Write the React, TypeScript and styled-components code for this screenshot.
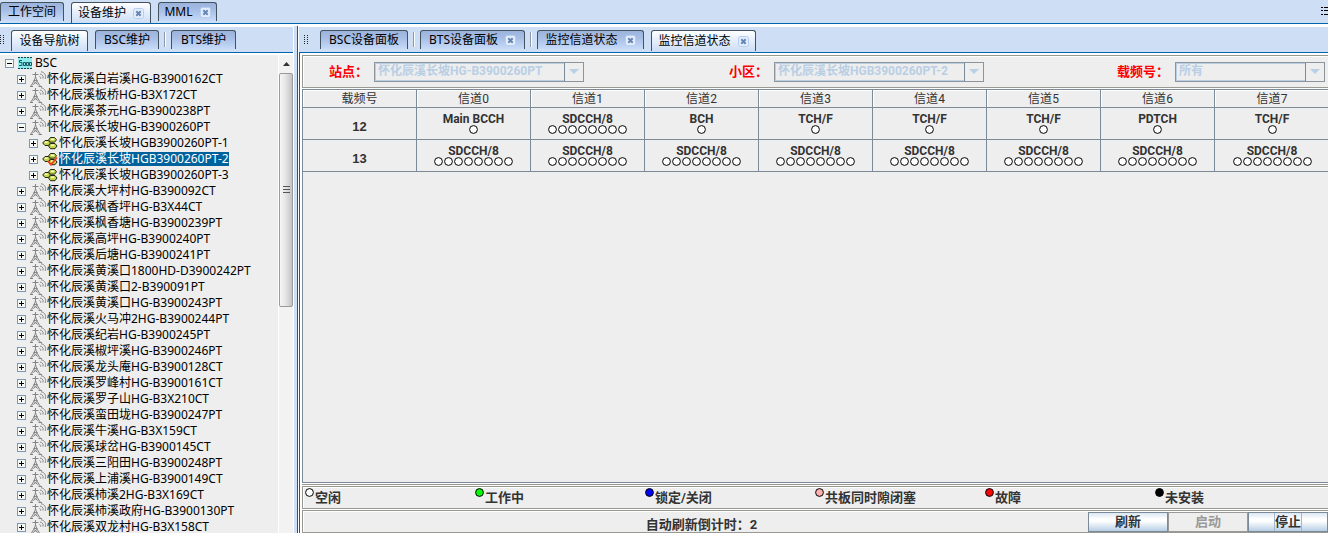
import React from "react";
import styled, { createGlobalStyle, css } from "styled-components";

const CJK = `"Noto Sans CJK SC", sans-serif`;
const UI = `"Noto Sans", ${CJK}`;
const BOLD = `Roboto, ${CJK}`;

const Global = createGlobalStyle`
  * { box-sizing: border-box; }
  html, body, #root { height: 100%; margin: 0; }
  body { background: #fff; font: 12px/16px ${UI}; color: #000; overflow: hidden; }
  button, select { font: inherit; color: inherit; margin: 0; padding: 0; }
`;

const Page = styled.div`
  display: flex;
  flex-direction: column;
  height: 100%;
`;

const TabBar = styled.nav<{ $top?: boolean }>`
  flex: none;
  display: flex;
  align-items: flex-end;
  height: ${(p) => (p.$top ? 24 : 26)}px;
  padding-bottom: ${(p) => (p.$top ? 1 : 2)}px;
  background: #cedef5;
  border-bottom: 1px solid #0063ad;
  overflow: hidden;
`;

const Tab = styled.button<{ $active?: boolean; $w: number }>`
  flex: none;
  display: flex;
  align-items: center;
  justify-content: center;
  gap: 7px;
  width: ${(p) => p.$w}px;
  height: ${(p) => (p.$active ? 21 : 19)}px;
  margin-bottom: ${(p) => (p.$active ? -1 : 1)}px;
  border: 1px solid #42525f;
  border-bottom: 0;
  border-radius: 3px 3px 0 0;
  white-space: nowrap;
  background: linear-gradient(#9cb4dc, #a5bce4 35%, #c6dbf8);
  ${(p) =>
    p.$active &&
    css`
      background: linear-gradient(#fff, #e6effc 45%, #cedef5);
    `}
`;

const Space = styled.span<{ $w: number }>`
  flex: none;
  width: ${(p) => p.$w}px;
`;

const Divider = styled.span`
  flex: none;
  width: 2px;
  height: 15px;
  margin: 0 5px 3px;
  background: #8e98a6;
  border-right: 1px solid #fff;
`;

const Grip = styled.span<{ $l: number; $r: number }>`
  flex: none;
  width: 5px;
  height: 10px;
  margin: 0 ${(p) => p.$r}px 5px ${(p) => p.$l}px;
  background: repeating-linear-gradient(90deg, transparent 0 1px, #cedef5 1px 3px),
    repeating-linear-gradient(#20262e 0 1px, #cedef5 1px 2px);
`;

const MenuMark = styled.svg`
  margin: 0 0 7px auto;
`;

const Body = styled.div`
  flex: 1;
  min-height: 0;
  display: flex;
  padding-top: 2px;
`;

const Side = styled.aside`
  flex: none;
  width: 293px;
  display: flex;
  flex-direction: column;
  padding-top: 1px;
`;

const TreeArea = styled.div`
  flex: 1;
  min-height: 0;
  display: flex;
  margin-top: 2px;
  background: #eee;
`;

const Tree = styled.ul`
  flex: 1;
  min-width: 0;
  margin: 0;
  padding: 0 0 0 5px;
  list-style: none;
  overflow: hidden;
`;

const Row = styled.li<{ $level: number }>`
  display: flex;
  align-items: center;
  height: 16px;
  padding-left: ${(p) => p.$level * 12}px;
  white-space: nowrap;
`;

const Toggle = styled.button`
  display: flex;
  width: 9px;
  height: 9px;
  margin-right: 4px;
  border: 0;
  background: none;
`;

const Label = styled.span<{ $selected?: boolean }>`
  line-height: 14px;
  ${(p) =>
    p.$selected &&
    css`
      background: #00629c;
      color: #fff;
    `}
`;

const Scroll = styled.div`
  width: 15px;
  display: flex;
  flex-direction: column;
  background: #f2f2f2;
  border-left: 1px solid #fff;
`;

const ScrollUp = styled.button`
  height: 18px;
  border: 0;
  background: none;
  display: flex;
  align-items: center;
  justify-content: center;
`;

const Thumb = styled.div`
  height: 234px;
  border: 1px solid #9a9a9a;
  border-radius: 2px;
  background: linear-gradient(90deg, #f6f6f6, #e6e6e6 45%, #c2c2c6);
  display: flex;
  align-items: center;
  justify-content: center;
`;

const Splitter = styled.div`
  flex: none;
  width: 6px;
  background: linear-gradient(90deg, #fff 0 1px, #cedef5 1px 4px, #0063ad 4px 5px, #fff 5px 6px);
`;

const Main = styled.main`
  flex: 1;
  min-width: 0;
  display: flex;
  flex-direction: column;
  padding-top: 1px;
`;

const Content = styled.div`
  flex: 1;
  min-height: 0;
  display: flex;
  flex-direction: column;
  padding: 2px 0 0 2px;
  border-left: 1px solid #0063ad;
  background: #fff;
`;

const Filters = styled.form`
  flex: none;
  display: grid;
  grid-template-columns: 281px 400px 1fr;
  align-items: center;
  height: 33px;
  border: 1px solid #999892;
  border-right: 0;
  background: #eee;
  box-shadow: inset 1px 1px #fff;
`;

const Field = styled.div<{ $end?: boolean }>`
  display: flex;
  align-items: center;
  justify-content: flex-end;
  padding-right: ${(p) => (p.$end ? 3 : 0)}px;
`;

const FieldLabel = styled.label`
  margin-right: 6px;
  font: bold 13px/18px ${BOLD};
  color: #f00;
  white-space: nowrap;
`;

const SelectBox = styled.span<{ $w: number }>`
  display: grid;
  grid-template-columns: 1fr 19px;
  width: ${(p) => p.$w}px;
  height: 20px;
  border: 1px solid #8c949c;
`;

const Select = styled.select`
  grid-area: 1 / 1 / 2 / 3;
  appearance: none;
  min-width: 0;
  width: 100%;
  height: 18px;
  padding: 0 22px 2px 2px;
  border: 1px solid #b8cfe5;
  border-radius: 0;
  outline: 0;
  background: #eee;
  && {
    font: bold 12px/14px ${BOLD};
    color: #b8cfe5;
    opacity: 1;
  }
`;

const Arrow = styled.span`
  grid-area: 1 / 2;
  z-index: 1;
  display: flex;
  align-items: center;
  justify-content: center;
  border-left: 1px solid #7a8a99;
  background: #eee;
  pointer-events: none;
`;

const GridPane = styled.section`
  flex: 1;
  min-height: 0;
  margin-top: 1px;
  border-left: 1px solid #7a8a99;
  border-bottom: 1px solid #7a8a99;
  background: #eee;
  overflow: hidden;
`;

const Table = styled.table`
  width: calc(100% + 1px);
  table-layout: fixed;
  border-collapse: separate;
  border-spacing: 0;
  border-top: 1px solid #7a8a99;
  color: #333;
`;

const Th = styled.th`
  height: 18px;
  padding: 0;
  font: 12px/16px Roboto, ${CJK};
  border-right: 1px solid #7a8a99;
  border-bottom: 1px solid #7a8a99;
  box-shadow: inset 1px 1px #fff;
  &:last-child { border-right: 0; }
`;

const Td = styled.td`
  height: 32px;
  padding: 0 0 1px;
  text-align: center;
  vertical-align: middle;
  font: bold 12px/12px ${BOLD};
  border-right: 1px solid #7a8a99;
  border-bottom: 1px solid #7a8a99;
  &:last-child { border-right: 0; }
`;

const RowHead = styled(Td).attrs({ as: "th" })`
  padding-top: 7px;
  font: bold 13px/16px "Liberation Sans", sans-serif;
`;

const Dots = styled.span`
  display: flex;
  justify-content: center;
  gap: 1px;
  height: 9px;
`;

const Legend = styled.ul`
  flex: none;
  display: flex;
  height: 23px;
  margin: 3px 0 0;
  padding: 1px 0 0 2px;
  list-style: none;
  border: 1px solid #999892;
  border-width: 1px 0 1px 1px;
  background: #eee;
  box-shadow: 0 -1px #fff, 0 -2px #999892, inset 1px 1px #fff;
`;

const LegendItem = styled.li`
  flex: none;
  width: 170px;
  display: flex;
  align-items: flex-start;
  gap: 1px;
  font: bold 13px/20px ${BOLD};
  color: #333;
`;

const Footer = styled.footer`
  flex: none;
  display: flex;
  justify-content: space-between;
  height: 23px;
  margin-top: 1px;
  border: 1px solid #999892;
  border-width: 1px 0 1px 1px;
  background: #eee;
  box-shadow: inset 1px 1px #fff;
`;

const Countdown = styled.output`
  flex: 1;
  padding: 5px 0 0 12px;
  text-align: center;
  font: bold 13px/16px ${BOLD};
  line-height: 18px;
  color: #333;
`;

const Action = styled.button`
  width: 80px;
  height: 20px;
  margin-top: 1px;
  border: 1px solid #7a8a99;
  background: linear-gradient(#dde8f3, #fff 35%, #fff 45%, #b8cfe5);
  && {
    font: bold 13px/18px ${BOLD};
    color: #333;
  }
  &&:disabled {
    border-color: #999;
    background: #eee;
    color: #999;
  }
`;

const FocusText = styled.span<{ $focus?: boolean }>`
  display: block;
  width: 28px;
  height: 18px;
  margin: 0 auto;
  white-space: nowrap;
  border: solid ${(p) => (p.$focus ? "#a3b8cc" : "transparent")};
  border-width: 0 1px;
`;

const CloseIcon = () => (
  <svg width="11" height="11" viewBox="0 0 11 11" aria-hidden="true">
    <rect x=".5" y=".5" width="10" height="10" rx="2" fill="#e4eefb" stroke="#b4cdf0" />
    <path d="M3.3 3.3l4.4 4.4M7.7 3.3L3.3 7.7" stroke="#6585b6" strokeWidth="2" />
  </svg>
);

const BoxIcon = ({ open }: { open?: boolean }) => (
  <svg width="9" height="9" viewBox="0 0 9 9" shapeRendering="crispEdges" aria-hidden="true">
    <rect x=".5" y=".5" width="8" height="8" fill="#f8f8f5" stroke="#7898b5" />
    <path d={open ? "M2 4.5h5" : "M2 4.5h5M4.5 2v5"} stroke="#000" />
  </svg>
);

const RackIcon = () => (
  <svg width="14" height="12" viewBox="0 0 14 12" aria-hidden="true">
    <path fill="#8fecec" d="M0 0h14v12H0z" />
    <path d="M0 .5h14M0 11.5h14" stroke="#1c4050" strokeDasharray="2 1" />
    <path d="M4 3.5H1.5v2H4v3H1M5.5 5.5h2v3h-2zM8.5 5.5h2v3h-2zM11.5 5.5h2v3h-2z" fill="none" stroke="#185a68" />
  </svg>
);

const TowerIcon = () => (
  <svg width="17" height="16" viewBox="0 0 17 16" fill="none" stroke="#858585" aria-hidden="true">
    <path d="M5.5 1v5M2.5 3.5h6M5.500 6L4 10 .5 15.500M5.500 6L7 10l3.500 5.500M3.500 9.500h4M4 10.500l4.500 3.500M7 10.500L2.500 14M0 15.500h3M8.500 15.500H12" />
    <path d="M9.500 5.500c1 .3 1.500 1 1.200 2.200M10 3c2.500.4 3.600 2.200 3 4.500M11 .700c3.800.700 5.300 3.800 4.200 7.300" />
  </svg>
);

const CellIcon = ({ checked }: { checked?: boolean }) => (
  <svg width="16" height="14" viewBox="0 0 16 14" aria-hidden="true">
    <g fill="#c4d450" stroke="#20280c">
      <path d="M.7 7L3 4.500h3.500L8.500 7l-2 2.500H3z" />
      <path d="M6.500 4L8.500 1.500h4l2 2.300-2 2.400H8.500z" />
      <path d="M6.500 10L8.500 7.500h4.500l2 2.500-2 2.700H8.500z" />
    </g>
    <path d="M3 6.200h2.500M9 3.200h3M9 9.200h3" stroke="#f8fcc8" strokeWidth="1.500" />
    {checked && <path d="M6 9l3 3.500 6-7" fill="none" stroke="#f03c18" strokeWidth="1.800" />}
  </svg>
);

const Dot = ({ fill = "#fff" }: { fill?: string }) => (
  <svg width="9" height="9" viewBox="0 0 9 9" aria-hidden="true">
    <circle cx="4.500" cy="4.500" r="3.900" fill={fill} stroke="#000" />
  </svg>
);

const channels = [0, 1, 2, 3, 4, 5, 6, 7];
const carriers: { id: number; slots: [string, number][] }[] = [
  {
    id: 12,
    slots: [["Main BCCH", 1], ["SDCCH/8", 8], ["BCH", 1], ["TCH/F", 1], ["TCH/F", 1], ["TCH/F", 1], ["PDTCH", 1], ["TCH/F", 1]],
  },
  { id: 13, slots: channels.map((): [string, number] => ["SDCCH/8", 8]) },
];

const legend = [
  ["空闲", "#fff"],
  ["工作中", "#0f0"],
  ["锁定/关闭", "#00f"],
  ["共板同时隙闭塞", "#ffafaf"],
  ["故障", "#f00"],
  ["未安装", "#000"],
];

type Node = { text: string; cell?: boolean; open?: boolean; selected?: boolean };
const site = (text: string): Node => ({ text: "怀化辰溪" + text });
const nodes: Node[] = [
  site("白岩溪HG-B3900162CT"),
  site("板桥HG-B3X172CT"),
  site("茶元HG-B3900238PT"),
  { ...site("长坡HG-B3900260PT"), open: true },
  { ...site("长坡HGB3900260PT-1"), cell: true },
  { ...site("长坡HGB3900260PT-2"), cell: true, selected: true },
  { ...site("长坡HGB3900260PT-3"), cell: true },
  ...[
    "大坪村HG-B390092CT",
    "枫香坪HG-B3X44CT",
    "枫香塘HG-B3900239PT",
    "高坪HG-B3900240PT",
    "后塘HG-B3900241PT",
    "黄溪口1800HD-D3900242PT",
    "黄溪口2-B390091PT",
    "黄溪口HG-B3900243PT",
    "火马冲2HG-B3900244PT",
    "纪岩HG-B3900245PT",
    "椒坪溪HG-B3900246PT",
    "龙头庵HG-B3900128CT",
    "罗峰村HG-B3900161CT",
    "罗子山HG-B3X210CT",
    "蛮田垅HG-B3900247PT",
    "牛溪HG-B3X159CT",
    "球岔HG-B3900145CT",
    "三阳田HG-B3900248PT",
    "上浦溪HG-B3900149CT",
    "柿溪2HG-B3X169CT",
    "柿溪政府HG-B3900130PT",
    "双龙村HG-B3X158CT",
  ].map(site),
];

const Combo = ({ id, label, value, width, end }: { id: string; label: string; value: string; width: number; end?: boolean }) => (
  <Field $end={end}>
    <FieldLabel htmlFor={id}>{label}</FieldLabel>
    <SelectBox $w={width}>
      <Select id={id} disabled defaultValue={value}>
        <option>{value}</option>
      </Select>
      <Arrow>
        <svg width="10" height="5" viewBox="0 0 10 5" aria-hidden="true">
          <path d="M0 0h10L5 5z" fill="#b8cfe5" />
        </svg>
      </Arrow>
    </SelectBox>
  </Field>
);

export default function App() {
  return (
    <Page>
      <Global />
      <TabBar $top>
        <Tab $w={64}>工作空间</Tab>
        <Space $w={7} />
        <Tab $active $w={80}>设备维护<CloseIcon /></Tab>
        <Space $w={7} />
        <Tab $w={59}>MML<CloseIcon /></Tab>
        <MenuMark width="7" height="9" viewBox="0 0 7 9" shapeRendering="crispEdges" aria-hidden="true">
          <path d="M0 1h2M3 1h4M0 4.500h2M3 4.500h4M0 8h2M3 8h4" stroke="#000" />
        </MenuMark>
      </TabBar>
      <Body>
        <Side>
          <TabBar>
            <Grip $l={0} $r={6} />
            <Tab $active $w={77}>设备导航树</Tab>
            <Space $w={7} />
            <Tab $w={64}>BSC维护</Tab>
            <Divider />
            <Tab $w={65}>BTS维护</Tab>
          </TabBar>
          <TreeArea>
            <Tree>
              <Row $level={0}>
                <Toggle aria-label="BSC"><BoxIcon open /></Toggle>
                <RackIcon />
                <Space $w={3} />
                <Label>BSC</Label>
              </Row>
              {nodes.map((n) => (
                <Row key={n.text} $level={n.cell ? 2 : 1}>
                  <Toggle aria-label={n.text}><BoxIcon open={n.open} /></Toggle>
                  {n.cell ? <CellIcon checked={n.selected} /> : <TowerIcon />}
                  <Space $w={n.cell ? 1 : 0} />
                  <Label $selected={n.selected}>{n.text}</Label>
                </Row>
              ))}
            </Tree>
            <Scroll>
              <ScrollUp aria-label="向上">
                <svg width="7" height="4" viewBox="0 0 7 4" aria-hidden="true"><path d="M0 4l3.500-4L7 4z" fill="#333" /></svg>
              </ScrollUp>
              <Thumb>
                <svg width="7" height="8" viewBox="0 0 7 8" shapeRendering="crispEdges" aria-hidden="true">
                  <path d="M0 .5h7M0 3.500h7M0 6.500h7" stroke="#555" />
                </svg>
              </Thumb>
            </Scroll>
          </TreeArea>
        </Side>
        <Splitter />
        <Main>
          <TabBar>
            <Grip $l={5} $r={11} />
            <Tab $w={88}>BSC设备面板</Tab>
            <Divider />
            <Tab $w={105}>BTS设备面板<CloseIcon /></Tab>
            <Divider />
            <Tab $w={107}>监控信道状态<CloseIcon /></Tab>
            <Space $w={7} />
            <Tab $active $w={105}>监控信道状态<CloseIcon /></Tab>
          </TabBar>
          <Content>
            <Filters>
              <Combo id="site" label="站点：" value="怀化辰溪长坡HG-B3900260PT" width={210} />
              <Combo id="cell" label="小区：" value="怀化辰溪长坡HGB3900260PT-2" width={210} />
              <Combo id="carrier" label="载频号：" value="所有" width={150} end />
            </Filters>
            <GridPane>
              <Table>
                <thead>
                  <tr>
                    <Th scope="col">载频号</Th>
                    {channels.map((c) => <Th key={c} scope="col">信道{c}</Th>)}
                  </tr>
                </thead>
                <tbody>
                  {carriers.map((row) => (
                    <tr key={row.id}>
                      <RowHead scope="row">{row.id}</RowHead>
                      {row.slots.map(([name, count], i) => (
                        <Td key={i}>
                          {name}
                          <Dots>
                            {Array.from({ length: count }, (_, k) => <Dot key={k} />)}
                          </Dots>
                        </Td>
                      ))}
                    </tr>
                  ))}
                </tbody>
              </Table>
            </GridPane>
            <Legend>
              {legend.map(([text, color]) => (
                <LegendItem key={text}><Dot fill={color} />{text}</LegendItem>
              ))}
            </Legend>
            <Footer>
              <Countdown>自动刷新倒计时：2</Countdown>
              <Action type="button"><FocusText>刷新</FocusText></Action>
              <Action type="button" disabled><FocusText>启动</FocusText></Action>
              <Action type="button"><FocusText $focus>停止</FocusText></Action>
            </Footer>
          </Content>
        </Main>
      </Body>
    </Page>
  );
}
